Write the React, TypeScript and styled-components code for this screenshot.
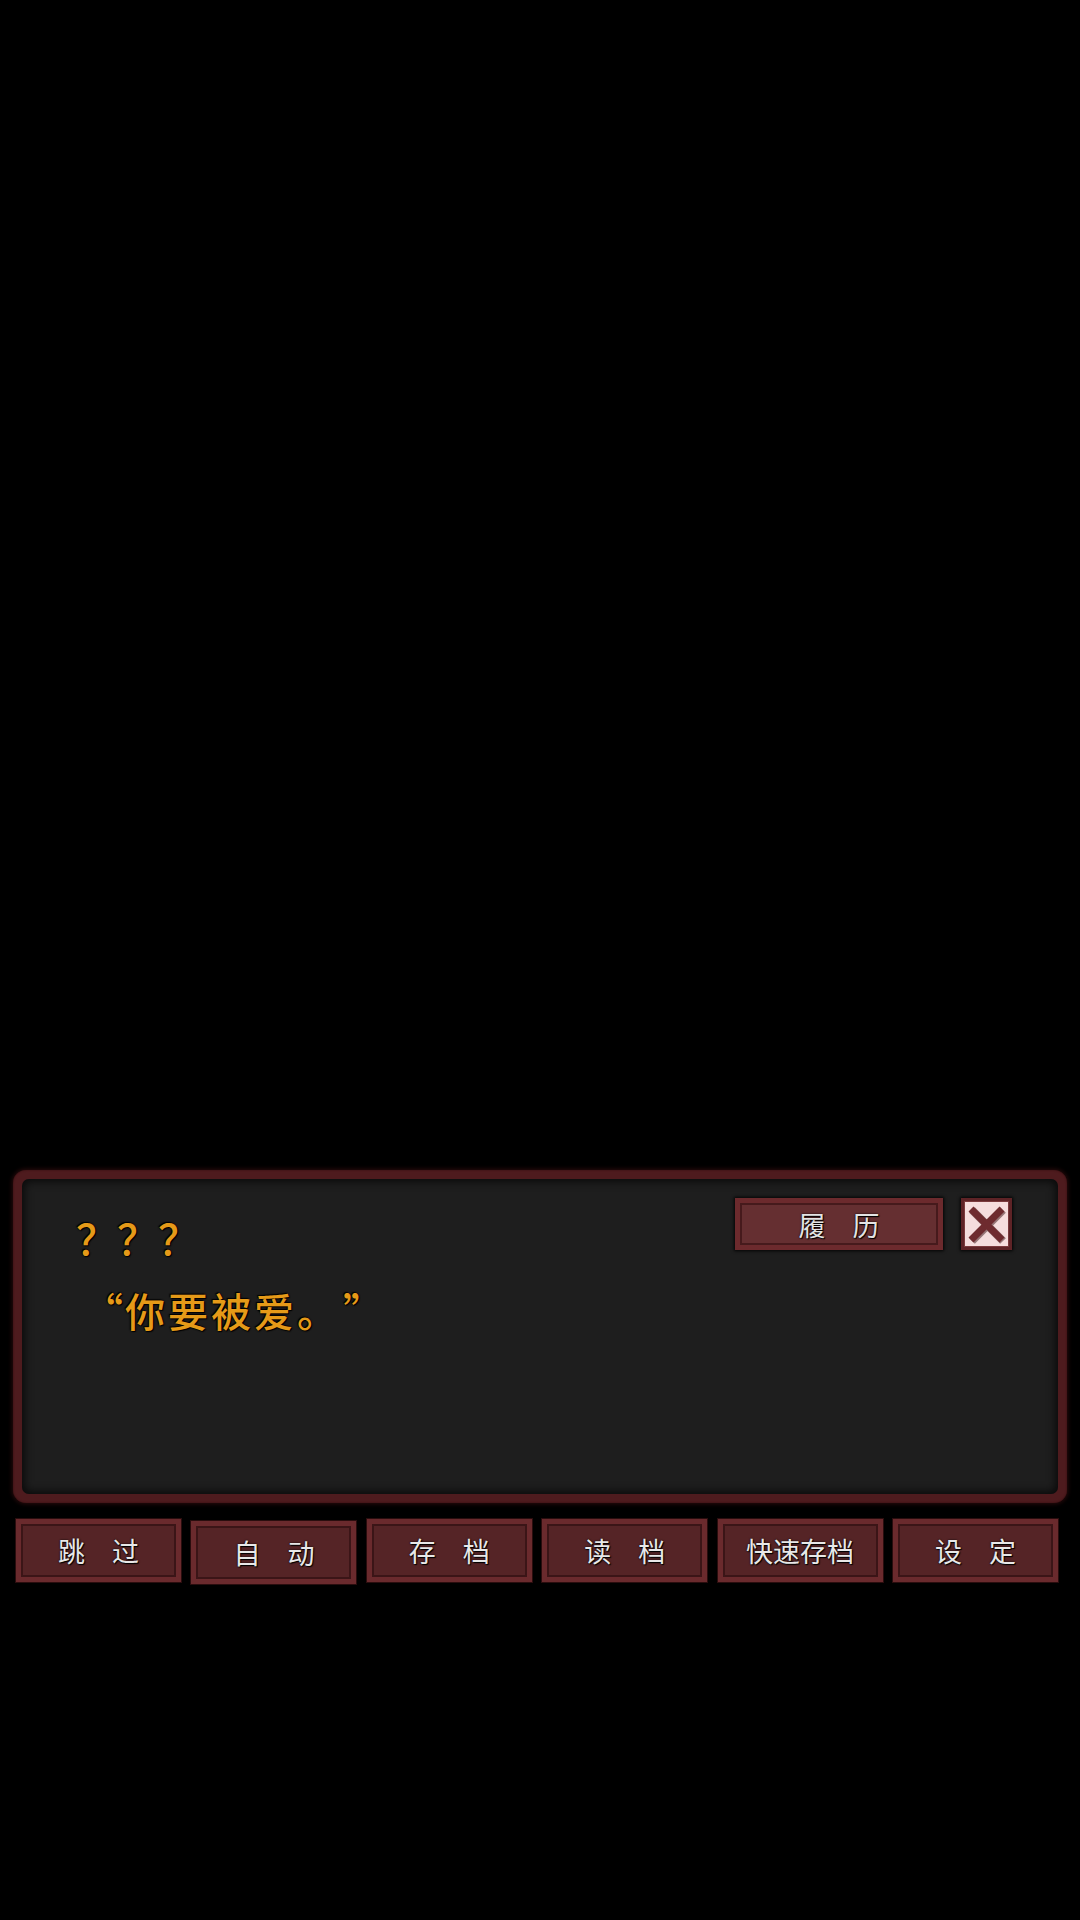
import React from "react";
import styled, { createGlobalStyle } from "styled-components";

const GlobalStyle = createGlobalStyle`
  html, body {
    margin: 0;
    padding: 0;
    background: #000;
  }
  body {
    font-family: "Noto Sans CJK SC", "Noto Sans", sans-serif;
  }
`;

const Screen = styled.div`
  width: 1080px;
  height: 1920px;
  background: #000;
  display: flex;
  flex-direction: column;
  overflow: hidden;
`;

// the game scene itself is empty (black) in this frame
const Scene = styled.div`
  height: 1170px;
  flex-shrink: 0;
`;

const DialogFrame = styled.div`
  margin: 0 13px;
  height: 333px;
  box-sizing: border-box;
  padding: 9px;
  border-radius: 13px;
  background: #4e1b1e;
  box-shadow: 0 0 4px 1px #2a0b0c, inset 0 0 2px #2e0c0e;
  display: flex;
`;

const DialogInner = styled.div`
  flex: 1;
  border-radius: 7px;
  background: #1e1e1e;
  box-shadow: inset 0 0 10px 2px rgba(0, 0, 0, 0.75);
  padding: 19px 46px 0 48px;
  display: flex;
  flex-direction: column;
`;

const TopRow = styled.div`
  display: flex;
  align-items: flex-start;
  justify-content: space-between;
`;

const orangeText = `
  color: #e59a18;
  font-weight: 500;
  text-shadow: 0 0 2px #000, 1px 1px 1px #000, -1px -1px 1px #000;
`;

const SpeakerName = styled.div`
  ${orangeText}
  font-size: 41px;
  line-height: 1;
  margin-top: 19px;
  margin-left: 6px;
`;

const Controls = styled.div`
  display: flex;
  gap: 18px;
`;

const HistoryButton = styled.button`
  width: 208px;
  height: 52px;
  box-sizing: border-box;
  border: 5px solid #6c2a2d;
  background: #652f31;
  box-shadow: inset 0 0 0 2px #461a1c, 0 0 3px 1px rgba(0, 0, 0, 0.9);
  color: #e4e4e4;
  font-family: "Noto Sans CJK SC", sans-serif;
  font-size: 27px;
  line-height: 1;
  text-shadow: 0 0 2px #000, 1px 1px 1px #000;
  padding: 0;
  display: flex;
  align-items: center;
  justify-content: center;
`;

const CloseButton = styled.button`
  width: 51px;
  height: 52px;
  box-sizing: border-box;
  border: 3px solid #5e2326;
  background: #f5dddd;
  box-shadow: inset 0 0 0 1px #7a3a3d, 0 0 3px 1px rgba(0, 0, 0, 0.9);
  padding: 0;
  display: flex;
  align-items: center;
  justify-content: center;
`;

const DialogLine = styled.div`
  ${orangeText}
  font-size: 40px;
  line-height: 1;
  letter-spacing: 3px;
  margin-top: 32px;
  margin-left: 12px;
`;

// full-width cell for the curly quotes, as the game's font sets them
const Quote = styled.span<{ $side: "open" | "close" }>`
  display: inline-block;
  width: 43px;
  letter-spacing: 0;
  text-align: ${(p) => (p.$side === "open" ? "right" : "left")};
  padding: ${(p) => (p.$side === "open" ? "0 2px 0 0" : "0 0 0 3px")};
  box-sizing: border-box;
`;

const MenuBar = styled.div`
  display: grid;
  grid-template-columns: repeat(6, 1fr);
  column-gap: 10.4px;
  padding: 16px 22px 0 16px;
  align-items: start;
`;

const MenuButton = styled.button<{ $pressed?: boolean }>`
  height: 63px;
  margin-top: ${(p) => (p.$pressed ? "2px" : "0")};
  box-sizing: border-box;
  border: 5px solid #6a2a2d;
  background: #552426;
  box-shadow: inset 0 0 0 2px #3b1517, 0 0 0 1px #2a0d0e;
  color: #e8e8e8;
  font-family: "Noto Sans CJK SC", sans-serif;
  font-size: 27px;
  line-height: 1;
  text-shadow: 0 0 2px #000, 1px 1px 1px #000;
  padding: 0;
  display: flex;
  align-items: center;
  justify-content: center;
`;

const CloseIcon = () => (
  <svg width="45" height="46" viewBox="0 0 45 46">
    <g strokeLinecap="butt">
      <path d="M7 8 L38 39 M38 8 L7 39" stroke="#3a1214" strokeWidth="8" opacity="0.5" transform="translate(1 1)" />
      <path d="M7 8 L38 39 M38 8 L7 39" stroke="#6e2b2f" strokeWidth="7" />
    </g>
  </svg>
);

const menu = [
  { label: "跳　过" },
  { label: "自　动", pressed: true },
  { label: "存　档" },
  { label: "读　档" },
  { label: "快速存档" },
  { label: "设　定" },
];

export default function App() {
  return (
    <>
      <GlobalStyle />
      <Screen>
        <Scene />
        <DialogFrame>
          <DialogInner>
            <TopRow>
              <SpeakerName>？？？</SpeakerName>
              <Controls>
                <HistoryButton>履　历</HistoryButton>
                <CloseButton>
                  <CloseIcon />
                </CloseButton>
              </Controls>
            </TopRow>
            <DialogLine>
              <Quote $side="open">“</Quote>你要被爱。<Quote $side="close">”</Quote>
            </DialogLine>
          </DialogInner>
        </DialogFrame>
        <MenuBar>
          {menu.map((m) => (
            <MenuButton key={m.label} $pressed={m.pressed}>
              {m.label}
            </MenuButton>
          ))}
        </MenuBar>
      </Screen>
    </>
  );
}
